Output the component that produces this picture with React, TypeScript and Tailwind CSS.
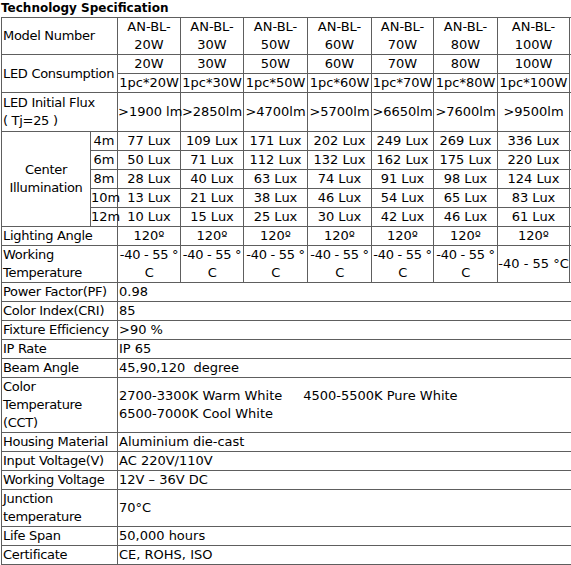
import React from 'react';

const models = ['20W', '30W', '50W', '60W', '70W', '80W', '100W'];
const flux = ['>1900 lm', '>2850lm', '>4700lm', '>5700lm', '>6650lm', '>7600lm', '>9500lm'];
const lux: [string, string[]][] = [
  ['4m', ['77', '109', '171', '202', '249', '269', '336']],
  ['6m', ['50', '71', '112', '132', '162', '175', '220']],
  ['8m', ['28', '40', '63', '74', '91', '98', '124']],
  ['10m', ['13', '21', '38', '46', '54', '65', '83']],
  ['12m', ['10', '15', '25', '30', '42', '46', '61']],
];

const specs: [React.ReactNode, React.ReactNode][] = [
  ['Power Factor(PF)', '0.98'],
  ['Color Index(CRI)', '85'],
  ['Fixture Efficiency', '>90 %'],
  ['IP Rate', 'IP 65'],
  ['Beam Angle', '45,90,120  degree'],
  [
    <>Color<br />Temperature<br />(CCT)</>,
    <>2700-3300K Warm White<span className="ml-[21px]">4500-5500K Pure White</span><br />6500-7000K Cool White</>,
  ],
  ['Housing Material', 'Aluminium die-cast'],
  ['Input Voltage(V)', 'AC 220V/110V'],
  ['Working Voltage', '12V \u2013 36V DC'],
  [<>Junction<br />temperature</>, '70°C'],
  ['Life Span', '50,000 hours'],
  ['Certificate', 'CE, ROHS, ISO'],
];

const td = 'border border-[#5e5e5e] p-0 leading-[18px] align-middle';
const c = `${td} text-center whitespace-nowrap`;
const l = `${td} text-left pl-[1px] whitespace-nowrap tracking-[-0.3px]`;
const v = `${td} text-left pl-[1px] whitespace-pre`;

export default function App() {
  return (
    <div className="w-[571px] h-[565px] overflow-hidden bg-white text-black font-['DejaVu_Sans',Verdana,sans-serif] text-[13px]">
      <div className="font-bold text-[12px] leading-[17px] pl-[1px]">Technology Specification</div>
      <table className="table-fixed border-collapse w-[665px] ml-[1px]">
        <colgroup>
          <col className="w-[89px]" />
          <col className="w-[27px]" />
          <col className="w-[63px]" />
          <col className="w-[63px]" />
          <col className="w-[64px]" />
          <col className="w-[64px]" />
          <col className="w-[62px]" />
          <col className="w-[64px]" />
          <col className="w-[72px]" />
          <col className="w-[97px]" />
        </colgroup>
        <tbody>
          <tr>
            <td colSpan={2} className={l}>Model Number</td>
            {models.map(m => (
              <td key={m} className={c}>AN-BL-<br />{m}</td>
            ))}
            <td className={c}></td>
          </tr>
          <tr>
            <td colSpan={2} rowSpan={2} className={l}>LED Consumption</td>
            {models.map(m => (
              <td key={m} className={c}>{m}</td>
            ))}
            <td rowSpan={2} className={c}></td>
          </tr>
          <tr>
            {models.map(m => (
              <td key={m} className={c}>1pc*{m}</td>
            ))}
          </tr>
          <tr className="h-[39px]">
            <td colSpan={2} className={l}>LED Initial Flux<br />( Tj=25 )</td>
            {flux.map(f => (
              <td key={f} className={c}>{f}</td>
            ))}
            <td className={c}></td>
          </tr>
          {lux.map(([dist, vals], i) => (
            <tr key={dist}>
              {i === 0 && (
                <td rowSpan={5} className={`${td} text-center tracking-[-0.3px]`}>Center<br />Illumination</td>
              )}
              <td className={c}>{dist}</td>
              {vals.map((n, j) => (
                <td key={j} className={c}>{n} Lux</td>
              ))}
              <td className={c}></td>
            </tr>
          ))}
          <tr>
            <td colSpan={2} className={l}>Lighting Angle</td>
            {models.map(m => (
              <td key={m} className={c}>120º</td>
            ))}
            <td className={c}></td>
          </tr>
          <tr>
            <td colSpan={2} className={l}>Working<br />Temperature</td>
            {models.slice(0, 6).map(m => (
              <td key={m} className={`${c} tracking-[-0.3px]`}>-40 - 55 °<br />C</td>
            ))}
            <td className={c}>-40 - 55 °C</td>
            <td className={c}></td>
          </tr>
          {specs.map(([label, value], i) => (
            <tr key={i}>
              <td colSpan={2} className={l}>{label}</td>
              <td colSpan={8} className={v}>{value}</td>
            </tr>
          ))}
          <tr>
            <td colSpan={2} className={l}>&nbsp;</td>
            <td colSpan={8} className={v}>&nbsp;</td>
          </tr>
        </tbody>
      </table>
    </div>
  );
}
